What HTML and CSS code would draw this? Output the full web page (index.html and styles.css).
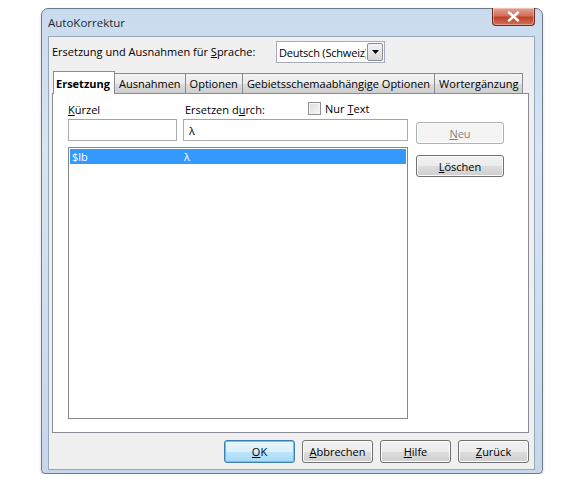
FILE: index.html
```html
<!DOCTYPE html>
<html lang="de">
<head>
    <meta charset="UTF-8">
    <title>AutoKorrektur</title>
    <link rel="stylesheet" href="styles.css">
</head>
<body>
    <div class="window">
        <div class="titlebar">
            <span class="title">AutoKorrektur</span>
            <button class="close-btn" title="Schliessen">
                <svg width="13" height="11" viewBox="0 0 13 11">
                    <path d="M2 1.5 L11 9.5 M11 1.5 L2 9.5" stroke="#fff" stroke-width="2.4" stroke-linecap="round"/>
                </svg>
            </button>
        </div>

        <div class="client">
            <div class="lang-row">
                <span class="lang-label">Ersetzung und Ausnahmen für <u>S</u>prache:</span>
                <div class="combo">
                    <span class="combo-value">Deutsch (Schweiz)</span>
                    <span class="combo-arrow">
                        <svg width="7" height="4" viewBox="0 0 7 4"><path d="M0 0 H7 L3.5 4 Z" fill="#000"/></svg>
                    </span>
                </div>
            </div>

            <div class="tabs">
                <div class="tab active">Ersetzung</div>
                <div class="tab">Ausnahmen</div>
                <div class="tab">Optionen</div>
                <div class="tab">Gebietsschemaabhängige Optionen</div>
                <div class="tab">Wortergänzung</div>
            </div>

            <div class="panel">
                <div class="edit-area">
                    <label class="field-label"><u>K</u>ürzel</label>
                    <div class="label-row">
                        <label class="field-label replace-label">Ersetzen d<u>u</u>rch:</label>
                        <label class="check">
                            <span class="check-box"></span>
                            <span>Nur <u>T</u>ext</span>
                        </label>
                    </div>
                    <input class="text-input" type="text" value="">
                    <input class="text-input" type="text" value="λ">
                    <div class="entry-list">
                        <div class="entry selected">
                            <span class="entry-short">$lb</span>
                            <span>λ</span>
                        </div>
                    </div>
                </div>

                <div class="side-buttons">
                    <button class="btn disabled"><u>N</u>eu</button>
                    <button class="btn"><u>L</u>öschen</button>
                </div>
            </div>

            <div class="footer">
                <button class="btn btn-default"><u>O</u>K</button>
                <button class="btn"><u>A</u>bbrechen</button>
                <button class="btn"><u>H</u>ilfe</button>
                <button class="btn"><u>Z</u>urück</button>
            </div>
        </div>
    </div>
</body>
</html>
```

FILE: styles.css
```css
* {
    margin: 0;
    padding: 0;
    box-sizing: border-box;
    font-family: 'Open Sans', 'DejaVu Sans', sans-serif;
}

body {
    background-color: #ffffff;
    font-size: 11px;
    color: #000;
}

u {
    text-decoration: underline;
    text-underline-offset: 1px;
}

/* window frame */

.window {
    width: 502px;
    height: 466px;
    margin: 8px 0 0 41px;
    border: 1px solid #6d7a88;
    border-radius: 7px 7px 4px 4px;
    background: linear-gradient(180deg, #c9dbee 0%, #d8e5f2 30%, #c6d7ea 100%);
    display: flex;
    flex-direction: column;
    box-shadow: 0 1px 3px rgba(0,0,0,0.15);
}

.titlebar {
    height: 27px;
    display: flex;
    justify-content: space-between;
    align-items: flex-start;
    padding-left: 6px;
    padding-right: 7px;
}

.title {
    margin-top: 6px;
    font-size: 11.5px;
    color: #1e2a36;
}

.close-btn {
    width: 43px;
    height: 18px;
    margin-top: -1px;
    border: 1px solid #6b2a21;
    border-top: none;
    border-radius: 0 0 4px 4px;
    background: linear-gradient(180deg, #e5a394 0%, #d0705c 45%, #c0432b 55%, #d2705a 100%);
    display: flex;
    align-items: center;
    justify-content: center;
    box-shadow: inset 0 0 0 1px rgba(255,255,255,0.35);
}

.client {
    flex: 1;
    margin: 0 7px 3px 6px;
    background-color: #f0f0f0;
    border: 1px solid #97a7b8;
    padding: 3px 5px 0 3px;
    display: flex;
    flex-direction: column;
}

/* language row */

.lang-row {
    display: flex;
    align-items: center;
    height: 23px;
}

.lang-label {
    width: 224px;
    white-space: nowrap;
}

.combo {
    width: 109px;
    height: 22px;
    display: flex;
    border: 1px solid #a5acb5;
    background-color: #fff;
}

.combo-value {
    flex: 1;
    overflow: hidden;
    white-space: nowrap;
    padding: 3px 0 0 2px;
    letter-spacing: -0.2px;
}

.combo-arrow {
    width: 16px;
    margin: 1px;
    border: 1px solid #8a8f96;
    border-radius: 2px;
    background: linear-gradient(180deg, #f4f4f4 0%, #e6e6e6 50%, #d6d6d6 100%);
    display: flex;
    align-items: center;
    justify-content: center;
}

/* tabs */

.tabs {
    display: flex;
    align-items: flex-end;
    margin-top: 7px;
    padding-left: 1px;
    height: 23px;
    position: relative;
    z-index: 1;
}

.tab {
    height: 20px;
    padding: 2px 4px 0 4px;
    border: 1px solid #898c95;
    border-bottom: none;
    border-left: none;
    background: linear-gradient(180deg, #f2f2f2 0%, #ebebeb 50%, #dddddd 51%, #cfcfcf 100%);
    white-space: nowrap;
}

.tab.active {
    height: 23px;
    padding: 4px 4px 0 2px;
    border-left: 1px solid #898c95;
    background: #fff;
    font-weight: bold;
    margin-bottom: -1px;
}

/* tab panel */

.panel {
    height: 340px;
    border: 1px solid #898c95;
    background-color: #fff;
    display: flex;
    padding: 7px 0 13px 15px;
}

.edit-area {
    display: grid;
    grid-template-columns: 109px 225px;
    grid-template-rows: 18px 22px 1fr;
    column-gap: 6px;
    width: 340px;
}

.field-label {
    display: block;
    padding-top: 1px;
    white-space: nowrap;
}

.label-row {
    display: flex;
}

.replace-label {
    width: 125px;
    padding-left: 2px;
}

.check {
    display: flex;
    align-items: center;
    gap: 4px;
    margin-top: -3px;
    white-space: nowrap;
}

.check-box {
    width: 13px;
    height: 13px;
    border: 1px solid #8f8f8f;
    background: linear-gradient(135deg, #dcdcdc 0%, #f6f6f6 100%);
    box-shadow: inset 0 0 0 1px #f4f4f4;
}

.text-input {
    height: 22px;
    border: 1px solid #abadb3;
    border-top-color: #a0a5ad;
    padding: 0 5px;
    font-size: 11px;
    outline: none;
}

.entry-list {
    grid-column: 1 / 3;
    margin-top: 6px;
    border: 1px solid #828790;
    padding: 1px;
}

.entry {
    display: flex;
    height: 15px;
    line-height: 15px;
    padding-left: 2px;
}

.entry.selected {
    background-color: #3399ff;
    color: #fff;
}

.entry-short {
    width: 112px;
}

/* buttons */

.side-buttons {
    display: flex;
    flex-direction: column;
    gap: 11px;
    margin-left: 8px;
    padding-top: 21px;
}

.btn {
    width: 88px;
    height: 22px;
    border: 1px solid #707070;
    border-radius: 3px;
    background: linear-gradient(180deg, #f2f2f2 0%, #ebebeb 50%, #dddddd 51%, #cfcfcf 100%);
    box-shadow: inset 0 0 0 1px #fcfcfc;
    font-size: 11px;
    color: #000;
}

.btn.disabled {
    border-color: #adb2b5;
    background: #f4f4f4;
    color: #838383;
}

.footer {
    display: flex;
    justify-content: flex-end;
    gap: 7px;
    margin-top: 7px;
}

.footer .btn {
    width: 71px;
    height: 23px;
}

.btn-default {
    border-color: #3c7fb1;
    background: linear-gradient(180deg, #eaf6fd 0%, #d9f0fc 50%, #bee6fd 51%, #a7d9f5 100%);
    box-shadow: inset 0 0 0 1px #48d3fb;
}
```
